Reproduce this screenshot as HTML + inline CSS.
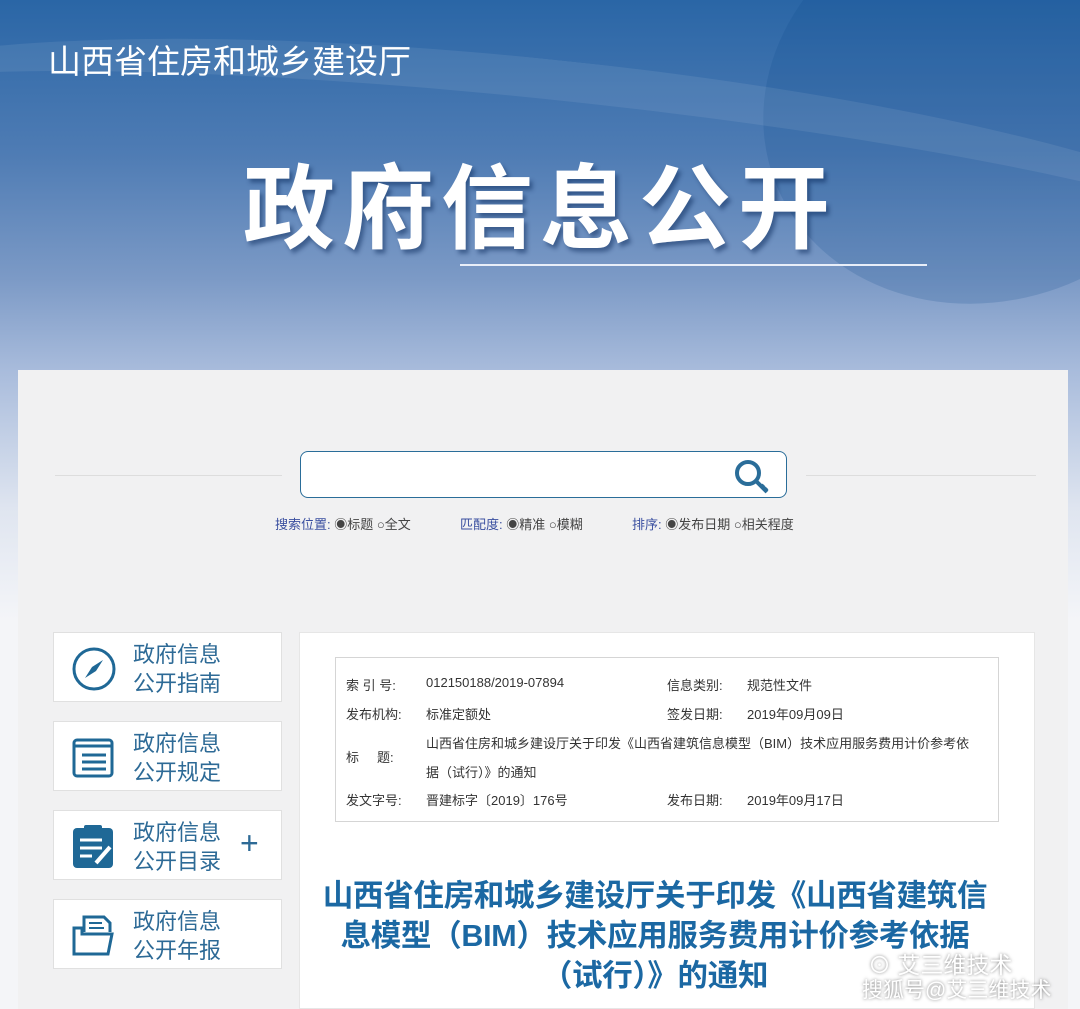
<!DOCTYPE html>
<html><head><meta charset="utf-8"><style>
*{margin:0;padding:0;box-sizing:border-box}
body{width:1080px;height:1009px;overflow:hidden;position:relative;font-family:"Liberation Sans","Noto Sans CJK SC",sans-serif;background:#f4f5f8}
.hero{position:absolute;left:0;top:0;width:1080px;height:620px;background:linear-gradient(180deg,#2a66a6 0%,#4f7cb4 25%,#7c9ac6 45%,#a9bcdc 60%,#dfe5f0 82%,#f4f5f8 100%)}
.sw1{position:absolute;left:-200px;top:60px;width:1500px;height:260px;border-radius:50%;border-top:40px solid rgba(255,255,255,.08);transform:rotate(6deg)}
.sw2{position:absolute;left:760px;top:-100px;width:460px;height:400px;background:rgba(10,70,140,.18);border-radius:50%;transform:rotate(-20deg)}
.t1{position:absolute;left:48px;top:35px;color:#fff;font-size:33px;letter-spacing:0}
.t2{position:absolute;left:243px;top:135px;color:#fff;font-size:92px;font-weight:bold;letter-spacing:7px;text-shadow:3px 4px 4px rgba(0,30,80,.45)}
.ul{position:absolute;left:460px;top:264px;width:467px;height:2px;background:#e8eef8}
.panel{position:absolute;left:18px;top:370px;width:1050px;height:639px;background:#f1f1f2}
.hl{position:absolute;top:475px;height:1px;background:#ddd}
.search{position:absolute;left:300px;top:451px;width:487px;height:47px;border:1px solid #2a6d99;border-radius:8px;background:#fff}
.opts{position:absolute;top:514px;font-size:13px;color:#444;white-space:nowrap}
.opts b{font-weight:normal;color:#3a4fa0}
.card{position:absolute;left:53px;width:229px;height:70px;background:#fff;border:1px solid #e0e0e0}
.card .tx{position:absolute;left:79px;top:7px;font-size:22px;line-height:29px;color:#2d6a96}
.card svg{position:absolute;left:18px;top:14px}
.main{position:absolute;left:299px;top:632px;width:736px;height:377px;background:#fff;border:1px solid #e6e6e6}
.info{position:absolute;left:335px;top:657px;width:664px;height:165px;border:1px solid #d5d5d5;font-size:13px;color:#333}
.info div{position:absolute;white-space:nowrap}
.h{position:absolute;left:296px;width:718px;text-align:center;font-size:30.5px;font-weight:bold;color:#1b68a3;line-height:40px;top:876px;letter-spacing:-0.3px}
.wm{position:absolute;color:#fff;white-space:nowrap;text-shadow:0 0 3px rgba(0,0,0,.5)}
</style></head><body>
<div class="hero"><div class="sw2"></div><div class="sw1"></div></div>
<div class="t1">山西省住房和城乡建设厅</div>
<div class="t2">政府信息公开</div>
<div class="ul"></div>
<div class="panel"></div>
<div class="hl" style="left:55px;width:227px"></div>
<div class="hl" style="left:806px;width:230px"></div>
<div class="search"><svg style="position:absolute;left:432px;top:6px" width="42" height="38" viewBox="0 0 42 38"><circle cx="15" cy="15" r="11" fill="none" stroke="#2a6d99" stroke-width="4"/><path d="M22 22 L34 34 M28 30 L31 27 M31 33 L34 30" stroke="#2a6d99" stroke-width="4" fill="none"/></svg></div>
<div class="opts" style="left:275px"><b>搜索位置:</b> ◉标题 ○全文</div>
<div class="opts" style="left:460px"><b>匹配度:</b> ◉精准 ○模糊</div>
<div class="opts" style="left:632px"><b>排序:</b> ◉发布日期 ○相关程度</div>

<div class="card" style="top:632px"><svg width="44" height="44" viewBox="0 0 44 44"><circle cx="22" cy="22" r="20" fill="none" stroke="#1f6896" stroke-width="3"/><path d="M31 13 L20 20 L13 31 L24 24 Z" fill="#1f6896"/></svg><div class="tx">政府信息<br>公开指南</div></div>
<div class="card" style="top:721px"><svg width="44" height="44" viewBox="0 0 44 44"><rect x="2" y="4" width="38" height="36" rx="3" fill="none" stroke="#1f6896" stroke-width="3"/><path d="M2 10H40M10 19H34M10 26H34M10 33H34" stroke="#1f6896" stroke-width="3"/></svg><div class="tx">政府信息<br>公开规定</div></div>
<div class="card" style="top:810px"><svg width="44" height="44" viewBox="0 0 44 44"><rect x="1" y="3" width="40" height="40" rx="4" fill="#1f6896"/><rect x="12" y="0" width="18" height="6" rx="2" fill="#1f6896"/><path d="M8 15H30M8 23H30M8 31H20" stroke="#fff" stroke-width="3"/><path d="M24 38 L38 22" stroke="#fff" stroke-width="4"/></svg><div class="tx">政府信息<br>公开目录</div><div style="position:absolute;left:186px;top:14px;font-size:32px;color:#2d6a96">+</div></div>
<div class="card" style="top:899px"><svg width="44" height="44" viewBox="0 0 44 44"><path d="M12 18V3H32L38 9V18" fill="none" stroke="#1f6896" stroke-width="3"/><path d="M17 9H30M17 14H32" stroke="#1f6896" stroke-width="2"/><path d="M2 14H10V20H40L36 40H2Z" fill="none" stroke="#1f6896" stroke-width="3"/></svg><div class="tx">政府信息<br>公开年报</div></div>

<div class="main"></div>
<div class="info">
<div style="left:10px;top:17px">索 引 号:</div><div style="left:90px;top:17px">012150188/2019-07894</div>
<div style="left:331px;top:17px">信息类别:</div><div style="left:411px;top:17px">规范性文件</div>
<div style="left:10px;top:46px">发布机构:</div><div style="left:90px;top:46px">标准定额处</div>
<div style="left:331px;top:46px">签发日期:</div><div style="left:411px;top:46px">2019年09月09日</div>
<div style="left:10px;top:89px">标&nbsp;&nbsp;&nbsp;&nbsp;&nbsp;题:</div>
<div style="left:90px;top:75px">山西省住房和城乡建设厅关于印发《山西省建筑信息模型（BIM）技术应用服务费用计价参考依</div>
<div style="left:90px;top:104px">据（试行）》的通知</div>
<div style="left:10px;top:132px">发文字号:</div><div style="left:90px;top:132px">晋建标字〔2019〕176号</div>
<div style="left:331px;top:132px">发布日期:</div><div style="left:411px;top:132px">2019年09月17日</div>
</div>
<div class="h">山西省住房和城乡建设厅关于印发《山西省建筑信<br>息模型（BIM）技术应用服务费用计价参考依据<br>（试行）》的通知</div>
<div class="wm" style="left:868px;top:946px;font-size:23px">⊙ 艾三维技术</div>
<div class="wm" style="left:862px;top:974px;font-size:21px">搜狐号@艾三维技术</div>
</body></html>
